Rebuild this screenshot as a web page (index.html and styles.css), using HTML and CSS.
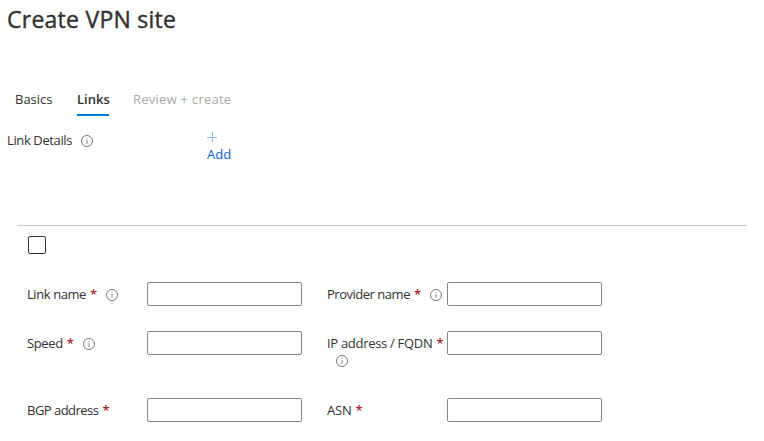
FILE: index.html
```html
<!DOCTYPE html>
<html lang="en">
<head>
<meta charset="utf-8">
<title>Create VPN site</title>
<link rel="stylesheet" href="styles.css">
</head>
<body>
<svg class="defs" width="0" height="0"><symbol id="info" viewBox="0 0 12 12"><circle cx="6" cy="6" r="5.5" fill="none" stroke="#777"/><path d="M6 5v4M6 3v1" stroke="#888"/></symbol></svg>
<h1>Create VPN site</h1>
<nav class="tabs">
  <a class="tab basics">Basics</a>
  <a class="tab active">Links</a>
  <a class="tab disabled">Review + create</a>
</nav>
<div class="details">
  <div class="details-label"><span class="heading">Link Details</span><svg class="info"><use href="#info"/></svg></div>
  <a class="add"><svg class="plus" viewBox="0 0 10 10"><path d="M5.5 0v10M0 5.5h10"/></svg><span>Add</span></a>
</div>
<section class="links">
  <input type="checkbox" class="check" aria-label="Select link">
  <div class="grid">
    <label><span class="tight">Link name</span><b>*</b><svg class="info"><use href="#info"/></svg></label><input class="field" type="text">
    <label><span class="provider">Provider name</span><b>*</b><svg class="info"><use href="#info"/></svg></label><input class="field" type="text">
    <label><span class="speed">Speed</span><b>*</b><svg class="info"><use href="#info"/></svg></label><input class="field" type="text">
    <label><span class="address">IP address / FQDN</span><b>*</b><svg class="info wrapped"><use href="#info"/></svg></label><input class="field" type="text">
    <label><span class="bgp">BGP address</span><b>*</b></label><input class="field" type="text">
    <label><span class="asn">ASN</span><b>*</b></label><input class="field" type="text">
  </div>
</section>
</body>
</html>
```
FILE: styles.css
```css
* { box-sizing: border-box; }
body { margin: 0; width: 764px; height: 441px; overflow: hidden; background: #fff; color: #323130; font: 13px/18px "Open Sans", "Noto Sans", sans-serif; }
.defs { position: absolute; }
h1 { margin: 0; padding: 4px 0 0 7px; height: 85px; font-size: 23px; line-height: 30px; font-weight: 500; letter-spacing: .25px; -webkit-text-stroke: .4px #323130; }
.tabs { display: flex; height: 46px; padding-left: 15px; }
.tab { height: 31px; padding-top: 5px; white-space: nowrap; }
.basics { width: 62px; }
.active { width: 32px; margin-right: 24px; font-weight: 600; border-bottom: 2px solid #0078d4; }
.disabled { color: #a9a9a9; letter-spacing: .25px; }
.details { display: flex; height: 94px; padding-left: 7px; }
.details-label { display: flex; width: 200px; }
.info { flex: none; width: 12px; height: 12px; margin: 4px 0 0 9px; }
.heading { letter-spacing: -.38px; }
.tight { letter-spacing: -.42px; }
.provider { letter-spacing: -.48px; }
.speed { letter-spacing: -.38px; }
.bgp { letter-spacing: -.52px; }
.address { letter-spacing: -.3px; }
.asn { letter-spacing: -.2px; }
.add { color: #0063d8; }
.plus { display: block; width: 10px; height: 10px; margin: 1px 0 3px; stroke: #8bb9ee; fill: none; }
.links { margin: 0 17px; border-top: 1px solid #c8c6c4; padding: 10px; }
.check { appearance: none; display: block; width: 18px; height: 18px; margin: 0 0 28px 1px; border: 1px solid #323130; border-radius: 2px; }
.grid { display: grid; grid-template-columns: 120px 180px 120px 155px; grid-template-rows: 49px 67px 40px; }
label { display: flex; flex-wrap: wrap; align-content: flex-start; padding-top: 3px; white-space: nowrap; }
.field { width: 155px; height: 24px; border: 1px solid #868686; border-radius: 2px; }
b { width: 7px; margin-left: 4px; color: #a4262c; font-weight: 600; }
.wrapped { margin-top: 3px; }
```
